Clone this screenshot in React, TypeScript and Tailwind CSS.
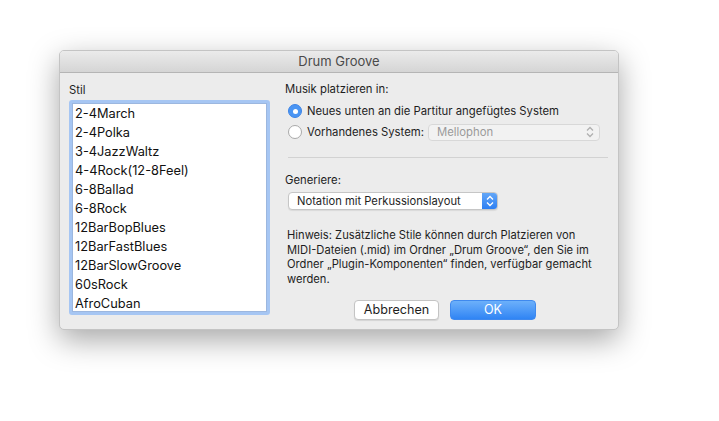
import React from "react";

const items = [
  "2-4March",
  "2-4Polka",
  "3-4JazzWaltz",
  "4-4Rock(12-8Feel)",
  "6-8Ballad",
  "6-8Rock",
  "12BarBopBlues",
  "12BarFastBlues",
  "12BarSlowGroove",
  "60sRock",
  "AfroCuban",
];

function Chevrons({ color }: { color: string }) {
  return (
    <svg width="8" height="12" viewBox="0 0 8 12" fill="none">
      <path d="M1 4.5 L4 1.5 L7 4.5" stroke={color} strokeWidth="1.3" />
      <path d="M1 7.5 L4 10.5 L7 7.5" stroke={color} strokeWidth="1.3" />
    </svg>
  );
}

export default function App() {
  return (
    <div
      className="w-[719px] h-[421px] bg-white overflow-hidden"
      style={{ fontFamily: "Inter, 'Liberation Sans', sans-serif" }}
    >
      <div className="ml-[59px] mt-[50px] w-[560px] h-[280px] rounded-[5px] bg-[#ececec] border border-[#c4c4c4] shadow-[0_10px_30px_rgba(0,0,0,0.35)] flex flex-col overflow-hidden">
        <div className="h-[22px] shrink-0 bg-gradient-to-b from-[#ebebeb] to-[#d5d5d5] border-b border-[#b5b5b5] flex items-center justify-center text-[13px] text-[#4a4a4a]">
          Drum Groove
        </div>
        <div className="flex pl-[9px] pt-[9px]">
          <div className="w-[201px] flex flex-col">
            <div className="text-[11.3px] text-[#1e1e1e] leading-[15px] h-[18px] pt-[1px]">Stil</div>
            <div className="h-[215px] border-[3px] border-[#a6c6f3] rounded-[3px] bg-white">
              <div className="border border-[#9cb7df] h-full pl-[2px] overflow-hidden">
                {items.map((t) => (
                  <div key={t} className="text-[12.8px] leading-[19px] h-[19px] text-[#111]">
                    {t}
                  </div>
                ))}
              </div>
            </div>
          </div>
          <div className="ml-[15px] w-[323px] flex flex-col">
            <div className="text-[11.3px] text-[#1e1e1e] leading-[15px] h-[15px]">Musik platzieren in:</div>
            <div className="mt-[7px] flex items-center h-[14px] ml-[3px]">
              <div className="w-[14px] h-[14px] shrink-0 rounded-full bg-[#4a95f3] flex items-center justify-center border border-[#3d84e6]">
                <div className="w-[5px] h-[5px] rounded-full bg-white" />
              </div>
              <span className="ml-[5px] text-[11.3px] text-[#1e1e1e] whitespace-nowrap">Neues unten an die Partitur angefügtes System</span>
            </div>
            <div className="mt-[5px] flex items-center h-[18px] ml-[3px]">
              <div className="w-[14px] h-[14px] shrink-0 rounded-full bg-white border border-[#a9a9a9]" />
              <span className="ml-[5px] w-[121px] shrink-0 text-[11.3px] text-[#1e1e1e] whitespace-nowrap">Vorhandenes System:</span>
              <div className="w-[172px] h-[17px] shrink-0 rounded-[4px] bg-[#f2f2f2] border border-[#d8d8d8] flex items-center justify-between pl-[8px] pr-[5px]">
                <span className="text-[11.3px] text-[#9a9a9a]">Mellophon</span>
                <Chevrons color="#b0b0b0" />
              </div>
            </div>
            <div className="mt-[16px] ml-[3px] w-[320px] h-px bg-[#d2d2d2]" />
            <div className="mt-[15px] text-[11.3px] text-[#1e1e1e] leading-[15px]">Generiere:</div>
            <div className="mt-[4px] ml-[3px] w-[210px] h-[18px] rounded-[4px] bg-white border border-[#c6c6c6] shadow-[0_1px_1px_rgba(0,0,0,0.08)] flex items-stretch overflow-hidden">
              <span className="flex-1 pl-[8px] text-[11.2px] text-[#1e1e1e] leading-[16px] whitespace-nowrap">Notation mit Perkussionslayout</span>
              <div className="w-[15px] bg-gradient-to-b from-[#62a6f7] to-[#2d7ff3] flex items-center justify-center">
                <Chevrons color="#ffffff" />
              </div>
            </div>
            <div className="mt-[18px] ml-[2px] text-[11.2px] leading-[14.5px] text-[#1e1e1e] w-[320px]">
              Hinweis: Zusätzliche Stile können durch Platzieren von MIDI-Dateien (.mid) im Ordner „Drum Groove“, den Sie im Ordner „Plugin-Komponenten“ finden, verfügbar gemacht werden.
            </div>
            <div className="mt-[14px] flex gap-[11px] ml-[69px]">
              <div className="w-[85px] h-[20px] rounded-[4px] bg-white border border-[#c4c4c4] shadow-[0_1px_1px_rgba(0,0,0,0.1)] flex items-center justify-center text-[12.6px] text-[#1e1e1e]">
                Abbrechen
              </div>
              <div className="w-[86px] h-[20px] rounded-[4px] bg-gradient-to-b from-[#6cb0fa] to-[#2f84f4] border border-[#3f89ee] flex items-center justify-center text-[12.6px] text-white">
                OK
              </div>
            </div>
          </div>
        </div>
      </div>
    </div>
  );
}
